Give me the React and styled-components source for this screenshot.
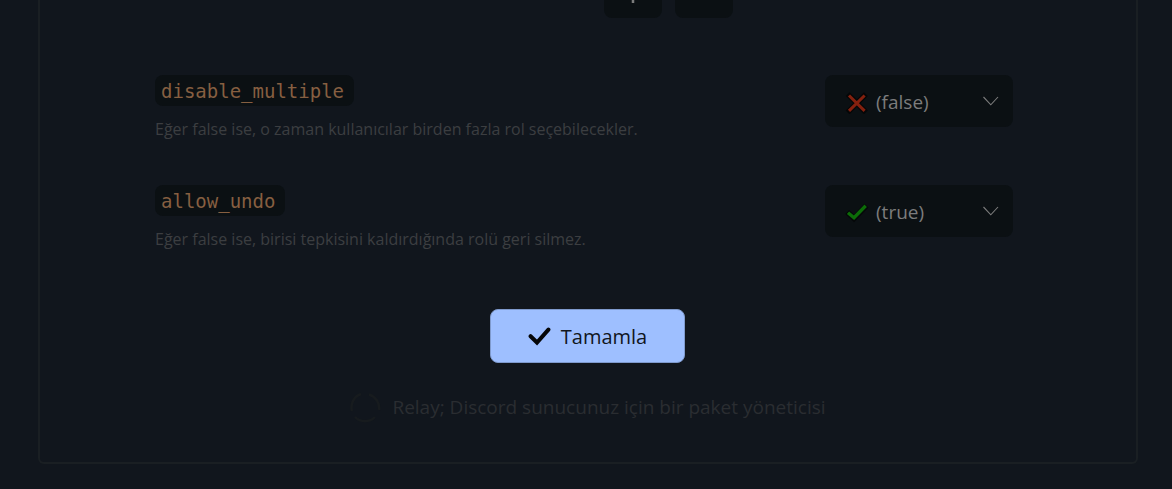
import React from "react";
import styled, { createGlobalStyle } from "styled-components";

const GlobalStyle = createGlobalStyle`
  *, *::before, *::after { box-sizing: border-box; }
  html, body { margin: 0; background: #11161d; }
  body { font-family: "Open Sans", "Noto Sans", sans-serif; overflow: hidden; }
`;

const Panel = styled.main`
  margin: 0 34px 25px 38px;
  padding: 0 116px 39px 115px;
  border: 2px solid #1a1f23;
  border-top: 0;
  border-radius: 0 0 6px 6px;
`;

const Toolbar = styled.div`
  display: flex;
  justify-content: flex-end;
  gap: 13px;
  margin-top: -34px;
  padding-right: 287px;
`;

const ToolButton = styled.button`
  display: grid;
  place-items: center;
  width: 58px;
  height: 52px;
  padding: 0;
  border: 0;
  border-radius: 8px;
  background: #0b1013;
  color: #7c7c7c;
`;

const Options = styled.div`
  display: flex;
  flex-direction: column;
  gap: 44px;
  margin-top: 57px;
  padding-right: 7px;
`;

const OptionRow = styled.div`
  display: flex;
  align-items: flex-start;
  justify-content: space-between;
  height: 66px;
`;

const Name = styled.label`
  display: inline-block;
  padding: 1px 10px 0 6px;
  border-radius: 8px;
  background: #0b1013;
  color: #865f41;
  font: 19px/30px "DejaVu Sans Mono", monospace;
`;

const Description = styled.p`
  margin: 11px 0 0;
  color: #3c3e41;
  font-size: 16px;
  line-height: 24px;
  white-space: nowrap;
`;

const SelectBox = styled.div`
  position: relative;
  flex: none;
  width: 188px;
`;

const Select = styled.select`
  display: block;
  appearance: none;
  width: 100%;
  height: 52px;
  padding: 2px 40px 0 51px;
  border: 0;
  border-radius: 8px;
  background: #0b1013;
  color: #7c7c7c;
  font-family: inherit;
  font-size: 19px;
`;

const StateIcon = styled.svg`
  position: absolute;
  left: 20px;
  top: 17px;
  pointer-events: none;
`;

const Chevron = styled.svg`
  position: absolute;
  right: 14px;
  top: 20px;
  pointer-events: none;
`;

const Submit = styled.button`
  display: flex;
  align-items: center;
  justify-content: center;
  gap: 10px;
  width: 195px;
  height: 54px;
  margin: 58px auto 0;
  padding: 0;
  border: 1px solid #7f9acd;
  border-radius: 8px;
  background: #9ebfff;
  color: #11161d;
  font-family: inherit;
  font-size: 20px;
`;

const Footer = styled.footer`
  display: flex;
  align-items: center;
  justify-content: center;
  gap: 11px;
  margin-top: 28px;
  color: #2a2d31;
  font-size: 19px;
  line-height: 32px;
  white-space: nowrap;
`;

function Cross() {
  return (
    <StateIcon width="24" height="22" viewBox="0 0 24 22" fill="none" aria-hidden="true">
      <path d="M4.5 4 19 18.5M19 4 4.5 18.5" stroke="#050708" strokeWidth="5.4" strokeLinecap="square" />
      <path d="M4 3.5 19.6 18.9M19.6 3.5 4 18.9" stroke="#84200e" strokeWidth="3" />
    </StateIcon>
  );
}

function Tick() {
  return (
    <StateIcon width="24" height="22" viewBox="0 0 24 22" fill="none" aria-hidden="true">
      <path d="M2.2 10 9 16.4 21.5 3.6" stroke="#050708" strokeWidth="5.6" />
      <path d="M3 10.7 9 15.7 20.7 3.8" stroke="#0c6c08" strokeWidth="3.4" />
    </StateIcon>
  );
}

function Option({ name, description, value }) {
  return (
    <OptionRow>
      <div>
        <Name htmlFor={name}>{name}</Name>
        <Description id={`${name}-help`}>{description}</Description>
      </div>
      <SelectBox>
        <Select id={name} defaultValue={value} aria-describedby={`${name}-help`}>
          <option value="false">(false)</option>
          <option value="true">(true)</option>
        </Select>
        {value === "true" ? <Tick /> : <Cross />}
        <Chevron width="17" height="12" viewBox="0 0 17 12" fill="none" aria-hidden="true">
          <path d="M1.5 2 8.8 9.8 16 2" stroke="#7c7c7c" strokeWidth="1.1" />
        </Chevron>
      </SelectBox>
    </OptionRow>
  );
}

export default function App() {
  return (
    <>
      <GlobalStyle />
      <Panel>
        <Toolbar>
          <ToolButton type="button" aria-label="Ekle">
            <svg width="22" height="22" viewBox="0 0 22 22" stroke="currentColor" strokeWidth="2.5" aria-hidden="true">
              <path d="M11 1V22M1 11H21" />
            </svg>
          </ToolButton>
          <ToolButton type="button" aria-label="Kaldır" />
        </Toolbar>
        <Options>
          <Option
            name="disable_multiple"
            value="false"
            description="Eğer false ise, o zaman kullanıcılar birden fazla rol seçebilecekler."
          />
          <Option
            name="allow_undo"
            value="true"
            description="Eğer false ise, birisi tepkisini kaldırdığında rolü geri silmez."
          />
        </Options>
        <Submit type="button">
          <svg width="23" height="19" viewBox="0 0 23 19" fill="none" aria-hidden="true">
            <path d="M2.6 9.2 9 15.5 20.4 2.6" stroke="#050608" strokeWidth="4" strokeLinecap="round" strokeLinejoin="miter" />
          </svg>
          Tamamla
        </Submit>
        <Footer>
          <svg width="32" height="32" viewBox="0 0 32 32" fill="none" stroke="#171b1e" strokeWidth="2.5" aria-hidden="true">
            <path d="M3 20A14 14 0 0 1 12 3M20 3.5A14 14 0 0 1 30 19M26 26A14 14 0 0 1 6 26" />
          </svg>
          Relay; Discord sunucunuz için bir paket yöneticisi
        </Footer>
      </Panel>
    </>
  );
}
